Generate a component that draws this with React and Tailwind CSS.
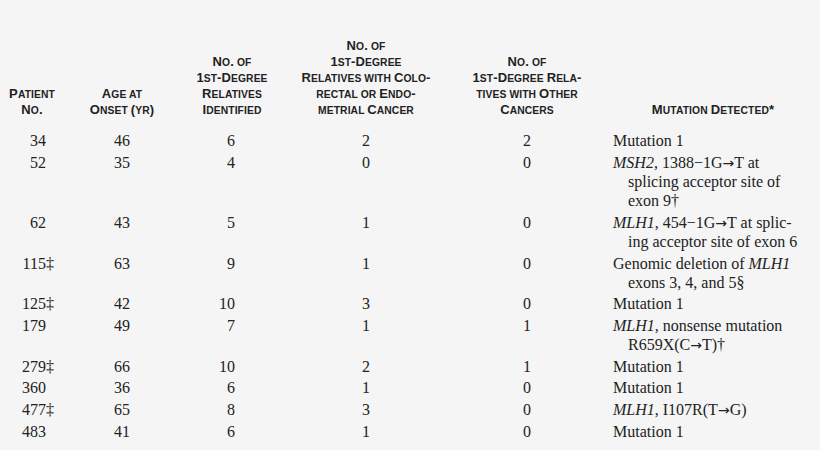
import React from 'react';

const Arrow = () => <span className="font-['DejaVu_Sans',sans-serif] text-[14px]">{'\u2192'}</span>;

const rows = [
    { id: '34', age: '46', rel: '6', crc: '2', other: '2', mut: [['Mutation 1']] },
    { id: '52', age: '35', rel: '4', crc: '0', other: '0', mut: [[<i key="g">MSH2</i>, ', 1388\u22121G', <Arrow key="a" />, 'T at'], ['splicing acceptor site of'], ['exon 9\u2020']] },
    { id: '62', age: '43', rel: '5', crc: '1', other: '0', mut: [[<i key="g">MLH1</i>, ', 454\u22121G', <Arrow key="a" />, 'T at splic-'], ['ing acceptor site of exon 6']] },
    { id: '115', mark: true, age: '63', rel: '9', crc: '1', other: '0', mut: [['Genomic deletion of ', <i key="g">MLH1</i>], ['exons 3, 4, and 5\u00a7']] },
    { id: '125', mark: true, age: '42', rel: '10', crc: '3', other: '0', mut: [['Mutation 1']] },
    { id: '179', age: '49', rel: '7', crc: '1', other: '1', mut: [[<i key="g">MLH1</i>, ', nonsense mutation'], ['R659X(C', <Arrow key="a" />, 'T)\u2020']] },
    { id: '279', mark: true, age: '66', rel: '10', crc: '2', other: '1', mut: [['Mutation 1']] },
    { id: '360', age: '36', rel: '6', crc: '1', other: '0', mut: [['Mutation 1']] },
    { id: '477', mark: true, age: '65', rel: '8', crc: '3', other: '0', mut: [[<i key="g">MLH1</i>, ', I107R(T', <Arrow key="a" />, 'G)']] },
    { id: '483', age: '41', rel: '6', crc: '1', other: '0', mut: [['Mutation 1']] },
];

const headers = [
    { w: 'w-[64px]', lines: ['Patient', 'No.'] },
    { w: 'w-[116px]', lines: ['Age at', 'Onset (yr)'] },
    { w: 'w-[104px]', lines: ['No. of', '1st-Degree', 'Relatives', 'Identified'] },
    { w: 'w-[164px]', lines: ['No. of', '1st-Degree', 'Relatives with Colo-', 'rectal or Endo-', 'metrial Cancer'] },
    { w: 'w-[158px]', lines: ['No. of', '1st-Degree Rela-', 'tives with Other', 'Cancers'] },
    { w: 'flex-1', lines: ['Mutation Detected*'] },
];

// hand-made small caps: lowercase runs become smaller capitals
const SmallCaps = ({ text }) => {
    const parts = text.match(/[a-z ]+|[^a-z ]+/g) || [];
    return parts.map((p, i) =>
        /[a-z]/.test(p) ? (
            <span key={i} className="text-[10.3px] uppercase">{p}</span>
        ) : (
            <span key={i}>{p}</span>
        )
    );
};

export default function App() {
    return (
        <div className="w-[820px] h-[450px] bg-[#f5f5f5] text-[#222] overflow-hidden">
            <div className="flex items-end pt-[38px]">
                {headers.map((h, i) => (
                    <div
                        key={i}
                        className={`${h.w} shrink-0 text-center font-['Liberation_Sans',Arial,sans-serif] font-bold text-[13px] leading-[16px] tracking-[0.1px] whitespace-nowrap`}
                    >
                        {h.lines.map((l) => (
                            <div key={l} className="h-[16px]">
                                <SmallCaps text={l} />
                            </div>
                        ))}
                    </div>
                ))}
            </div>

            <div className="pt-[12px] font-['Liberation_Serif','Times_New_Roman',serif] text-[16px] leading-[19.15px]">
                {rows.map((r) => (
                    <div key={r.id} className="flex py-[1.25px]">
                        <div className="w-[64px] shrink-0 whitespace-nowrap">
                            <span className="inline-block w-[46px] text-right">{r.id}</span>
                            {r.mark && <span>{'\u2021'}</span>}
                        </div>
                        <div className="w-[116px] shrink-0 text-center">{r.age}</div>
                        <div className="w-[104px] shrink-0 text-right pr-[49px]">{r.rel}</div>
                        <div className="w-[164px] shrink-0 text-center">{r.crc}</div>
                        <div className="w-[158px] shrink-0 text-center">{r.other}</div>
                        <div className="flex-1 pl-[7px] whitespace-nowrap">
                            {r.mut.map((line, j) => (
                                <div key={j} className={`h-[19.15px] ${j > 0 ? 'pl-[15px]' : ''}`}>
                                    {line}
                                </div>
                            ))}
                        </div>
                    </div>
                ))}
            </div>
        </div>
    );
}
